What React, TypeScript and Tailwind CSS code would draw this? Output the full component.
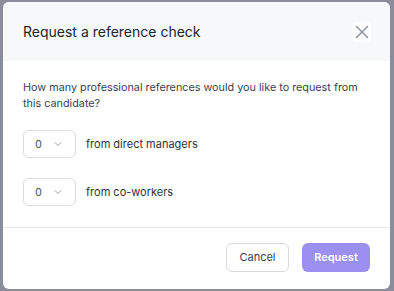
import { ChevronDown, X } from "lucide-react";

function CountSelect() {
  return (
    <div className="flex h-[28px] w-[53px] items-center rounded-md border border-[#d9dce1] bg-white pl-[11px] text-[11px] text-[#4b5563]">
      <span>0</span>
      <ChevronDown className="ml-[10px] h-[12px] w-[12px] text-[#9ca3af]" strokeWidth={2} />
    </div>
  );
}

export default function App() {
  return (
    <div
      className="h-[291px] w-[394px] bg-[#8b8e9a] pl-[3px] pt-[2px]"
      style={{ fontFamily: "Inter, 'Liberation Sans', sans-serif" }}
    >
      <div className="flex h-[287px] w-[387px] flex-col overflow-hidden rounded-md bg-white">
        <div className="flex h-[59px] items-center justify-between bg-[#f7f8fa] pl-[20px] pr-[19px]">
          <h2 className="text-[14px] text-[#1f2430]">Request a reference check</h2>
          <button type="button" className="flex h-[20px] w-[19px] items-center justify-center rounded-sm bg-white">
            <X className="h-[22px] w-[22px] shrink-0 text-[#8a909c]" strokeWidth={1.6} />
          </button>
        </div>

        <div className="flex flex-col gap-[18px] border-b border-[#e5e7eb] px-[20px] pb-[21px] pt-[19px]">
          <p className="text-[10.8px] leading-[16px] text-[#3b4250]">
            How many professional references would you like to request from this candidate?
          </p>
          <div className="flex flex-col gap-[20px]">
            <div className="flex items-center gap-[10px]">
              <CountSelect />
              <span className="text-[11px] text-[#2c3340]">from direct managers</span>
            </div>
            <div className="flex items-center gap-[10px]">
              <CountSelect />
              <span className="text-[11px] text-[#2c3340]">from co-workers</span>
            </div>
          </div>
        </div>

        <div className="flex flex-1 items-start justify-end gap-[13px] pr-[20px] pt-[15px]">
          <button
            type="button"
            className="h-[29px] w-[63px] rounded-md border border-[#d6d9de] bg-white text-[11px] text-[#374151]"
          >
            Cancel
          </button>
          <button
            type="button"
            className="h-[29px] w-[68px] rounded-md bg-[#9b90f0] text-[11px] font-semibold text-white"
          >
            Request
          </button>
        </div>
      </div>
    </div>
  );
}
